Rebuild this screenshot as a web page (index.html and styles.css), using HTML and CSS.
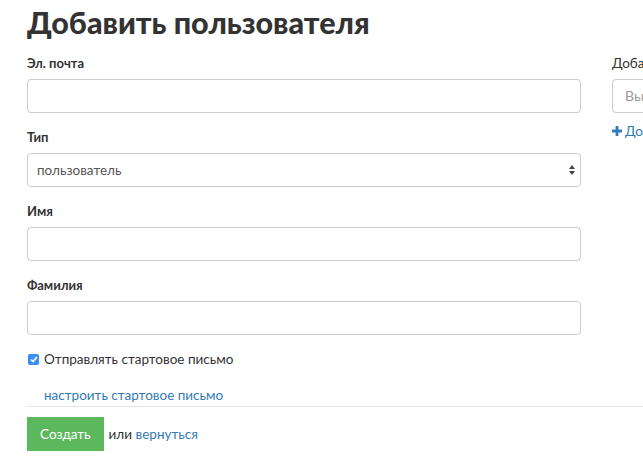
FILE: index.html
```html
<!DOCTYPE html>
<html lang="ru">
<head>
    <meta charset="UTF-8">
    <title>Добавить пользователя</title>
    <link rel="stylesheet" href="styles.css">
</head>
<body>
    <div class="page">
        <h1>Добавить пользователя</h1>

        <div class="columns">
            <div class="main-col">
                <div class="field">
                    <label class="label">Эл. почта</label>
                    <input type="text" class="input">
                </div>

                <div class="field">
                    <label class="label">Тип</label>
                    <div class="select">
                        <span>пользователь</span>
                        <svg class="arrows" width="6" height="10" viewBox="0 0 6 10">
                            <path d="M3 0 L6 4 H0 Z" fill="#444"/>
                            <path d="M3 10 L6 6 H0 Z" fill="#444"/>
                        </svg>
                    </div>
                </div>

                <div class="field">
                    <label class="label">Имя</label>
                    <input type="text" class="input">
                </div>

                <div class="field">
                    <label class="label">Фамилия</label>
                    <input type="text" class="input">
                </div>

                <label class="check">
                    <span class="check-box">
                        <svg width="8" height="7" viewBox="0 0 8 7">
                            <path d="M1 3.6 L3.1 5.6 L7 1" fill="none" stroke="#fff" stroke-width="1.6"/>
                        </svg>
                    </span>
                    Отправлять стартовое письмо
                </label>

                <a href="#" class="setup-link">настроить стартовое письмо</a>
            </div>

            <div class="side-col">
                <label class="side-label">Добавить в группу</label>
                <div class="side-input">Выберите группу</div>
                <a href="#" class="add-link">
                    <svg class="plus" width="10" height="10" viewBox="0 0 10 10">
                        <path d="M3.6 0 H6.4 V3.6 H10 V6.4 H6.4 V10 H3.6 V6.4 H0 V3.6 H3.6 Z" fill="#337ab7"/>
                    </svg>
                    Добавить группу
                </a>
            </div>
        </div>

        <div class="actions">
            <button class="create">Создать</button>
            <span class="or">или <a href="#">вернуться</a></span>
        </div>
    </div>
</body>
</html>
```

FILE: styles.css
```css
body {
    margin: 0;
    font-family: Lato, "Open Sans", sans-serif;
    color: #333;
    background-color: white;
    overflow: hidden;
}

.page {
    padding-left: 27px;
}

h1 {
    margin: 0;
    padding-top: 4px;
    font-size: 30.5px;
    font-weight: 900;
    color: #333;
    line-height: 36px;
    white-space: nowrap;
}

.columns {
    display: flex;
    gap: 31px;
    margin-top: 15px;
}

.main-col {
    width: 554px;
    flex-shrink: 0;
}

.field {
    margin-bottom: 16px;
}

.label {
    display: block;
    font-size: 13px;
    font-weight: bold;
    line-height: 16px;
    margin-bottom: 8px;
}

.input,
.select {
    display: block;
    box-sizing: border-box;
    width: 100%;
    height: 34px;
    border: 1px solid #ccc;
    border-radius: 4px;
    padding: 0 9px;
    font-family: inherit;
    font-size: 13.5px;
}

.select {
    display: flex;
    align-items: center;
    justify-content: space-between;
    padding-right: 5px;
    color: #555;
}

.check {
    display: flex;
    align-items: center;
    gap: 5px;
    font-size: 13.5px;
    margin-top: 12px;
    padding-left: 1px;
}

.check-box {
    display: flex;
    align-items: center;
    justify-content: center;
    width: 11px;
    height: 11px;
    background-color: #3b8ff3;
    border-radius: 2px;
}

.setup-link {
    display: block;
    margin-top: 20px;
    padding-left: 17px;
    font-size: 13.5px;
    line-height: 16px;
    color: #337ab7;
    text-decoration: none;
}

.side-col {
    white-space: nowrap;
}

.side-label {
    display: block;
    font-size: 13.5px;
    line-height: 16px;
    margin-bottom: 8px;
}

.side-input {
    box-sizing: border-box;
    width: 200px;
    height: 34px;
    border: 1px solid #ccc;
    border-radius: 4px;
    padding: 0 12px;
    line-height: 32px;
    font-size: 14px;
    color: #999;
}

.add-link {
    display: flex;
    align-items: center;
    gap: 3px;
    margin-top: 10px;
    font-size: 13.5px;
    color: #337ab7;
    text-decoration: none;
}

.actions {
    display: flex;
    align-items: center;
    gap: 5px;
    margin-top: 3px;
    border-top: 1px solid #e5e5e5;
    padding-top: 10px;
}

.create {
    height: 34px;
    padding: 0 13px;
    border: none;
    background-color: #5cb85c;
    color: white;
    font-family: inherit;
    font-size: 13.5px;
}

.or {
    font-size: 13.5px;
}

.or a {
    color: #337ab7;
    text-decoration: none;
}
```
